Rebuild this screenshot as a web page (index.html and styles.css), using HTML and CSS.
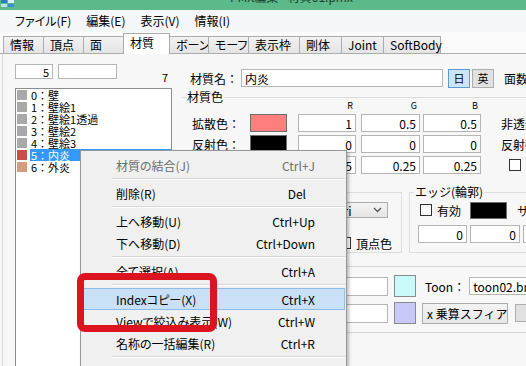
FILE: index.html
```html
<!DOCTYPE html>
<html lang="ja">
<head>
    <meta charset="UTF-8">
    <meta name="viewport" content="width=device-width, initial-scale=1.0">
    <title>PMX編集</title>
    <link rel="stylesheet" href="styles.css">
</head>
<body>
    <div class="titlebar">
        <svg class="app-icon" width="16" height="8" viewBox="0 0 16 8">
            <rect x="1" y="0" width="6" height="3" fill="#2f7fc0"/>
            <rect x="8" y="0" width="6" height="3" fill="#d8eef8"/>
            <rect x="1" y="4" width="6" height="3" fill="#bfe3f5"/>
            <rect x="8" y="4" width="6" height="3" fill="#3b8fd0"/>
        </svg>
        <span class="title">PMX編集 - 材質01.pmx</span>
    </div>

    <div class="menubar">
        <span>ファイル(F)</span>
        <span>編集(E)</span>
        <span>表示(V)</span>
        <span>情報(I)</span>
    </div>

    <div class="tabs">
        <div class="tab" style="width:41px">情報</div>
        <div class="tab" style="width:41px">頂点</div>
        <div class="tab" style="width:43px">面</div>
        <div class="tab active" style="width:47px">材質</div>
        <div class="tab" style="width:40px">ボーン</div>
        <div class="tab" style="width:41px">モーフ</div>
        <div class="tab" style="width:52px">表示枠</div>
        <div class="tab" style="width:43px">剛体</div>
        <div class="tab" style="width:43px">Joint</div>
        <div class="tab" style="width:58px">SoftBody</div>
    </div>

    <div class="page">
        <div class="left">
            <div class="count-row">
                <input class="field idx" type="text" value="5" readonly>
                <input class="field filter" type="text" value="" readonly>
                <span class="total">7</span>
            </div>
            <ul class="mat-list">
                <li><span class="sw sw-gray"></span><span class="nm">0：壁</span></li>
                <li><span class="sw sw-gray"></span><span class="nm">1：壁絵1</span></li>
                <li><span class="sw sw-gray"></span><span class="nm">2：壁絵1透過</span></li>
                <li><span class="sw sw-gray"></span><span class="nm">3：壁絵2</span></li>
                <li><span class="sw sw-gray"></span><span class="nm">4：壁絵3</span></li>
                <li class="selected"><span class="sw sw-red"></span><span class="nm">5：内炎</span></li>
                <li><span class="sw sw-tan"></span><span class="nm">6：外炎</span></li>
            </ul>
        </div>

        <div class="right">
            <div class="name-row">
                <span class="name-label">材質名：</span>
                <input class="field name-input" type="text" value="内炎" readonly>
                <button class="lang-btn on">日</button>
                <button class="lang-btn">英</button>
                <span class="face-count">面数：</span>
            </div>

            <div class="color-group">
                <div class="group-label">材質色</div>
                <div class="rgb-head">
                    <span class="head-gap"></span>
                    <span class="h1">R</span>
                    <span class="h2">G</span>
                    <span class="h3">B</span>
                </div>
                <div class="color-row">
                    <span class="clabel">拡散色：</span>
                    <span class="swatch diffuse"></span>
                    <input class="field c1" type="text" value="1" readonly>
                    <input class="field c2" type="text" value="0.5" readonly>
                    <input class="field c3" type="text" value="0.5" readonly>
                    <span class="side">非透過度：</span>
                </div>
                <div class="color-row">
                    <span class="clabel">反射色：</span>
                    <span class="swatch specular"></span>
                    <input class="field c1" type="text" value="0" readonly>
                    <input class="field c2" type="text" value="0" readonly>
                    <input class="field c3" type="text" value="0" readonly>
                    <span class="side">反射強度：</span>
                </div>
                <div class="color-row">
                    <span class="clabel">環境色：</span>
                    <span class="swatch ambient"></span>
                    <input class="field c1" type="text" value="0.5" readonly>
                    <input class="field c2" type="text" value="0.25" readonly>
                    <input class="field c3" type="text" value="0.25" readonly>
                    <span class="cb side-cb"></span>
                </div>
            </div>

            <div class="boxes">
                <div class="box draw-box">
                    <div class="draw-row first">
                        <span class="cb"></span><span class="cb-text">両面描画</span>
                        <span class="select tri">Tri
                            <svg width="9" height="6" viewBox="0 0 9 6"><path d="M1 1 L4.5 4.5 L8 1" fill="none" stroke="#555" stroke-width="1.3"/></svg>
                        </span>
                    </div>
                    <div class="draw-row second">
                        <span class="cb"></span><span class="cb-text">頂点色</span>
                    </div>
                </div>
                <div class="box edge-box">
                    <div class="group-label edge-label">エッジ(輪郭)</div>
                    <div class="edge-row">
                        <span class="cb"></span><span class="cb-text">有効</span>
                        <span class="swatch edge-color"></span>
                        <span class="edge-size">サイズ</span>
                    </div>
                    <div class="edge-values">
                        <input class="field e1" type="text" value="0" readonly>
                        <input class="field e2" type="text" value="0" readonly>
                        <input class="field e3" type="text" value="0" readonly>
                    </div>
                </div>
            </div>

            <div class="tex-section">
                <div class="tex-row">
                    <input class="field tex-input" type="text" value="" readonly>
                    <span class="swatch tex-swatch toon-color"></span>
                    <span class="toon-label">Toon：</span>
                    <input class="field toon-input" type="text" value="toon02.bmp" readonly>
                </div>
                <div class="tex-row">
                    <input class="field tex-input" type="text" value="" readonly>
                    <span class="swatch tex-swatch sphere-color"></span>
                    <span class="select sphere">x 乗算スフィア
                        <svg width="9" height="6" viewBox="0 0 9 6"><path d="M1 1 L4.5 4.5 L8 1" fill="none" stroke="#666" stroke-width="1.3"/></svg>
                    </span>
                    <button class="small-btn"></button>
                </div>
            </div>
        </div>
    </div>

    <!-- right-click menu over the material list -->
    <div class="ctx-menu">
        <div class="mi off"><span>材質の結合(J)</span><span>Ctrl+J</span></div>
        <div class="sep"></div>
        <div class="mi"><span>削除(R)</span><span class="del">Del</span></div>
        <div class="sep"></div>
        <div class="mi"><span>上へ移動(U)</span><span>Ctrl+Up</span></div>
        <div class="mi"><span>下へ移動(D)</span><span>Ctrl+Down</span></div>
        <div class="sep"></div>
        <div class="mi"><span>全て選択(A)</span><span>Ctrl+A</span></div>
        <div class="sep"></div>
        <div class="mi hot"><span>Indexコピー(X)</span><span>Ctrl+X</span></div>
        <div class="mi"><span>Viewで絞込み表示(W)</span><span>Ctrl+W</span></div>
        <div class="mi"><span>名称の一括編集(R)</span><span>Ctrl+R</span></div>
        <div class="sep"></div>
        <div class="mi"><span>材質モーフの作成(M)</span><span></span></div>
    </div>

    <div class="mark"></div>
</body>
</html>
```

FILE: styles.css
```css
* {
    box-sizing: border-box;
}
body {
    margin: 0;
    width: 526px;
    height: 366px;
    overflow: hidden;
    position: relative;
    background-color: #f7f7f7;
    font-family: "Noto Sans CJK JP", "Noto Sans", sans-serif;
    font-size: 12px;
    color: #000;
}
input, button {
    font-family: inherit;
}

/* window chrome */
.titlebar {
    height: 10px;
    background-color: #5cb98a;
    display: flex;
    overflow: hidden;
}
.app-icon {
    flex-shrink: 0;
}
.title {
    margin-left: 214px;
    margin-top: -11px;
    line-height: 16px;
    color: #1d3b2b;
    white-space: nowrap;
}
.menubar {
    height: 22px;
    background-color: #f5f6f7;
    display: flex;
    align-items: center;
    padding-left: 8px;
    font-feature-settings: "palt";
}
.menubar span {
    padding: 0 7px;
    margin-right: 1px;
    line-height: 22px;
}
.tabs {
    height: 22px;
    background-color: #fafafa;
    display: flex;
    align-items: flex-end;
    padding-left: 3px;
    border-bottom: 1px solid #adadad;
    font-feature-settings: "palt";
}
.tab {
    height: 17px;
    line-height: 16px;
    padding-left: 6px;
    border: 1px solid #acacac;
    border-bottom: none;
    margin-right: -1px;
    background: linear-gradient(#f2f2f2, #e4e4e4);
    white-space: nowrap;
}
.tab.active {
    height: 21px;
    line-height: 18px;
    margin: 0 -1px -1px -2px;
    background: #fff;
    position: relative;
    z-index: 1;
}

/* tab page */
.page {
    display: flex;
    height: 312px;
    margin-left: 2px;
    border-left: 1px solid #d9d9d9;
    overflow: hidden;
}
.field {
    height: 18px;
    padding: 0 3px;
    border: 1px solid #b5b5b5;
    background-color: #fff;
    font-size: 12px;
    text-align: right;
    outline: none;
}
.left {
    width: 175px;
    flex-shrink: 0;
    padding: 10px 0 0 12px;
}
.count-row {
    display: flex;
    height: 15px;
}
.idx {
    width: 38px;
    height: 15px;
    font-size: 11px;
}
.filter {
    width: 59px;
    height: 15px;
    margin-left: 5px;
}
.total {
    margin-left: 45px;
    margin-top: 6px;
    font-size: 11px;
    line-height: 14px;
}
.mat-list {
    list-style: none;
    margin: 9px 0 0 0;
    padding: 0 0 0 1px;
    width: 157px;
    height: 279px;
    border: 1px solid #8c8c8c;
    border-bottom: none;
    background-color: #fff;
}
.mat-list li {
    display: flex;
    align-items: center;
    height: 12px;
}
.sw {
    width: 10px;
    height: 10px;
    flex-shrink: 0;
}
.sw-gray { background-color: #a9a9a9; }
.sw-red { background-color: #c5504b; }
.sw-tan { background-color: #d39d82; }
.nm {
    flex: 1;
    margin-left: 3px;
    padding-left: 1px;
    font-size: 11px;
    line-height: 12px;
    white-space: nowrap;
}
.mat-list li.selected .nm {
    background-color: #3399ff;
    color: #fff;
}

/* material editor */
.right {
    flex: 1;
    padding-top: 14px;
    white-space: nowrap;
    overflow: hidden;
}
.name-row {
    display: flex;
    align-items: center;
    height: 20px;
    padding-left: 12px;
}
.name-label {
    width: 51px;
    flex-shrink: 0;
}
.name-input {
    width: 202px;
    flex-shrink: 0;
    text-align: left;
}
.lang-btn {
    width: 22px;
    height: 19px;
    margin-left: 2px;
    padding: 0;
    flex-shrink: 0;
    border: 1px solid #adadad;
    background-color: #e1e1e1;
    font-size: 11px;
}
.lang-btn.on {
    margin-left: 5px;
    border-color: #5b9bd5;
    background-color: #cce4f7;
}
.face-count {
    margin-left: 10px;
}
.color-group {
    margin: 9px 0 0 4px;
    border-top: 1px solid #dcdcdc;
}
.group-label {
    width: fit-content;
    margin: -9px 0 0 4px;
    padding: 0 1px;
    line-height: 16px;
    background-color: #f7f7f7;
}
.rgb-head {
    display: flex;
    height: 10px;
    margin-top: -4px;
    font-size: 9px;
    line-height: 10px;
}
.rgb-head span {
    text-align: right;
    padding-right: 3px;
    flex-shrink: 0;
}
.head-gap { width: 105px; }
.h1 { width: 58px; margin-left: 11px; }
.h2 { width: 59px; margin-left: 5px; }
.h3 { width: 58px; margin-left: 3px; }
.color-row {
    display: flex;
    align-items: center;
    height: 18px;
    margin-top: 3px;
}
.clabel {
    width: 58px;
    flex-shrink: 0;
    text-align: right;
}
.swatch {
    width: 37px;
    height: 18px;
    flex-shrink: 0;
    margin-left: 10px;
    border: 1px solid #6e6e6e;
}
.diffuse { background-color: #ff7f7f; }
.specular { background-color: #000; }
.ambient { background-color: #803f3f; }
.c1, .c2, .c3 {
    flex-shrink: 0;
}
.c1 { width: 58px; margin-left: 11px; }
.c2 { width: 59px; margin-left: 5px; }
.c3 { width: 58px; margin-left: 3px; }
.side {
    margin-left: 20px;
}
.cb {
    display: inline-block;
    width: 12px;
    height: 12px;
    flex-shrink: 0;
    border: 1px solid #333;
    background-color: #fff;
}
.side-cb {
    margin-left: 28px;
}
.boxes {
    display: flex;
    height: 61px;
    margin-top: 18px;
}
.box {
    flex-shrink: 0;
    border: 1px solid #dcdcdc;
}
.draw-box {
    width: 217px;
    margin-left: 7px;
}
.draw-row {
    display: flex;
    align-items: center;
    justify-content: flex-end;
}
.draw-row.first {
    height: 16px;
    margin-top: 9px;
    padding-right: 13px;
}
.draw-row.second {
    height: 14px;
    margin-top: 18px;
    padding-right: 9px;
}
.cb-text {
    margin-left: 5px;
}
.select {
    display: flex;
    align-items: center;
    justify-content: space-between;
    padding: 0 5px 0 4px;
    border: 1px solid #acacac;
    background: linear-gradient(#f3f3f3, #e6e6e6);
}
.tri {
    width: 56px;
    height: 16px;
    margin-left: 30px;
}
.edge-box {
    width: 140px;
    margin-left: 7px;
}
.edge-row {
    display: flex;
    align-items: center;
    height: 18px;
    margin-top: 1px;
    padding-left: 10px;
}
.edge-color {
    height: 17px;
    margin-left: 9px;
    background-color: #000;
}
.edge-size {
    margin-left: 10px;
}
.edge-values {
    display: flex;
    margin-top: 6px;
    padding-left: 8px;
}
.e1 { width: 49px; flex-shrink: 0; }
.e2 { width: 50px; margin-left: 3px; flex-shrink: 0; }
.e3 { width: 50px; margin-left: 3px; flex-shrink: 0; }
.tex-section {
    height: 67px;
    margin-top: 13px;
    padding-top: 8px;
    border-top: 1px solid #d5d5d5;
    border-bottom: 1px solid #d5d5d5;
}
.tex-row {
    display: flex;
    align-items: center;
    height: 22px;
    margin-bottom: 5px;
}
.tex-input {
    width: 138px;
    height: 19px;
    margin-left: 72px;
    flex-shrink: 0;
}
.tex-swatch {
    width: 22px;
    height: 22px;
    margin-left: 6px;
    border-color: #8a8a8a;
}
.toon-color { background-color: #c8fafa; }
.sphere-color { background-color: #c8c8fa; }
.toon-label {
    margin-left: 9px;
}
.toon-input {
    width: 80px;
    margin-left: 4px;
    flex-shrink: 0;
    text-align: left;
}
.sphere {
    width: 86px;
    height: 21px;
    margin-left: 6px;
    flex-shrink: 0;
}
.small-btn {
    width: 50px;
    height: 18px;
    margin-left: 7px;
    flex-shrink: 0;
    border: 1px solid #adadad;
    background-color: #e1e1e1;
}

/* context menu */
.ctx-menu {
    position: absolute;
    left: 80px;
    top: 150px;
    width: 267px;
    height: 216px;
    overflow: hidden;
    padding: 3px 1px;
    background-color: #f0f0f0;
    border: 1px solid #979797;
    border-bottom: none;
    box-shadow: 2px 2px 3px rgba(0, 0, 0, 0.25);
    font-feature-settings: "palt";
}
.mi {
    display: flex;
    justify-content: space-between;
    align-items: center;
    height: 22px;
    padding: 0 29px 0 33px;
    border: 1px solid transparent;
    white-space: nowrap;
}
.mi.off {
    color: #6d6d6d;
}
.mi.hot {
    background-color: #c9e0f7;
    border-color: #8dbce8;
}
.del {
    margin-right: 9px;
}
.sep {
    height: 6px;
    margin-left: 30px;
    padding-top: 2px;
}
.sep::after {
    content: "";
    display: block;
    border-top: 1px solid #d7d7d7;
    border-bottom: 1px solid #fff;
}

/* red highlight drawn over the screenshot */
.mark {
    position: absolute;
    left: 77px;
    top: 273px;
    width: 140px;
    height: 59px;
    border: 7px solid #dc1420;
    border-radius: 8px;
}
```
